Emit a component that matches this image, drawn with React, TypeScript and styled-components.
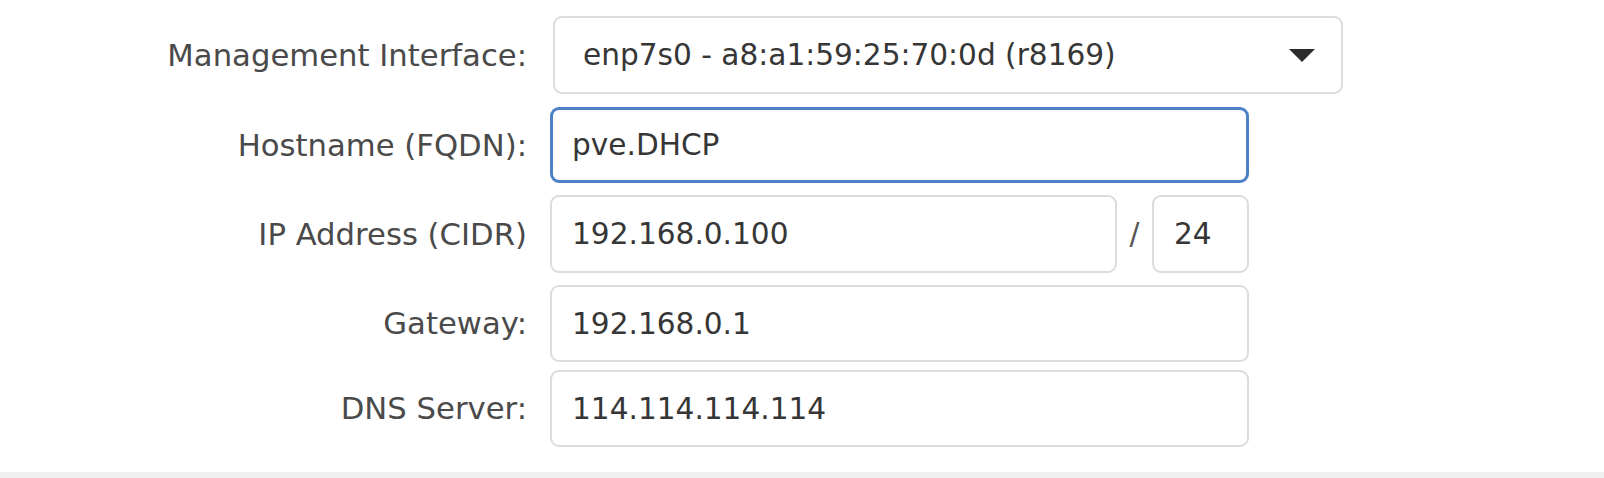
import React from "react";
import styled, { createGlobalStyle } from "styled-components";

const Global = createGlobalStyle`
  html, body { margin: 0; padding: 0; background: #ffffff; }
  body { font-family: "DejaVu Sans", Verdana, "Liberation Sans", sans-serif; }
  * { box-sizing: border-box; }
`;

const Page = styled.div`
  width: 1604px;
  height: 478px;
  display: flex;
  flex-direction: column;
  background: #ffffff;
  overflow: hidden;
`;

const Form = styled.div`
  display: flex;
  flex-direction: column;
  padding-top: 16px;
`;

const Row = styled.div<{ $mt?: number }>`
  display: grid;
  grid-template-columns: 527px 1fr;
  column-gap: 23px;
  align-items: center;
  margin-top: ${(p) => p.$mt ?? 0}px;
`;

const Label = styled.label`
  text-align: right;
  font-size: 30.7px;
  color: #4a4a4a;
  white-space: nowrap;
`;

const FieldLine = styled.div`
  display: flex;
  align-items: center;
`;

const Select = styled.div`
  margin-left: 3px;
  width: 790px;
  height: 78px;
  border: 2px solid #dcdcdc;
  border-radius: 9px;
  background: #fff;
  display: flex;
  align-items: center;
  justify-content: space-between;
  padding: 0 26px 0 28px;
  font-size: 29.6px;
  color: #363636;
  white-space: nowrap;
`;

const Arrow = styled.span`
  width: 0;
  height: 0;
  border-left: 13px solid transparent;
  border-right: 13px solid transparent;
  border-top: 13px solid #2b2b2b;
`;

const Input = styled.input<{ $w: number; $h?: number; $focused?: boolean }>`
  width: ${(p) => p.$w}px;
  height: ${(p) => p.$h ?? 78}px;
  border: ${(p) => (p.$focused ? "3px solid #4d81c6" : "2px solid #dcdcdc")};
  border-radius: 9px;
  background: #fff;
  padding: 0 0 0 ${(p) => (p.$focused ? 19 : 20)}px;
  font-family: "DejaVu Sans", Verdana, "Liberation Sans", sans-serif;
  font-size: 29.6px;
  color: #363636;
  outline: none;
  margin: 0;
`;

const Slash = styled.span`
  width: 35px;
  text-align: center;
  font-size: 29.6px;
  color: #555;
`;

const Footer = styled.div`
  margin-top: auto;
  height: 6px;
  background: #efefef;
`;

export default function App() {
  return (
    <>
      <Global />
      <Page>
        <Form>
          <Row>
            <Label>Management Interface:</Label>
            <FieldLine>
              <Select>
                <span>enp7s0 - a8:a1:59:25:70:0d (r8169)</span>
                <Arrow />
              </Select>
            </FieldLine>
          </Row>
          <Row $mt={13}>
            <Label>Hostname (FQDN):</Label>
            <FieldLine>
              <Input $w={699} $h={76} $focused readOnly value="pve.DHCP" />
            </FieldLine>
          </Row>
          <Row $mt={12}>
            <Label>IP Address (CIDR)</Label>
            <FieldLine>
              <Input $w={567} readOnly value="192.168.0.100" />
              <Slash>/</Slash>
              <Input $w={97} readOnly value="24" />
            </FieldLine>
          </Row>
          <Row $mt={12}>
            <Label>Gateway:</Label>
            <FieldLine>
              <Input $w={699} $h={77} readOnly value="192.168.0.1" />
            </FieldLine>
          </Row>
          <Row $mt={8}>
            <Label>DNS Server:</Label>
            <FieldLine>
              <Input $w={699} $h={77} readOnly value="114.114.114.114" />
            </FieldLine>
          </Row>
        </Form>
        <Footer />
      </Page>
    </>
  );
}
